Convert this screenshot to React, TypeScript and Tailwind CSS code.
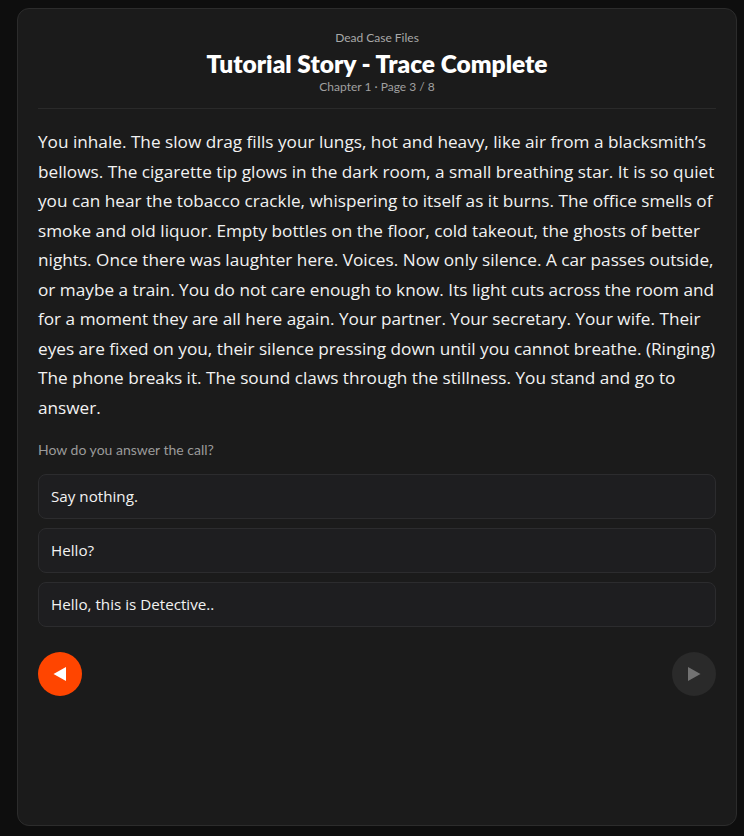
const choices = ["Say nothing.", "Hello?", "Hello, this is Detective.."];

export default function App() {
  return (
    <div
      className="min-h-[836px] bg-[#0e0e0e] pl-[17px] pr-[7px] pt-2 pb-[10px]"
      style={{ fontFamily: "Lato, 'Noto Sans', sans-serif" }}
    >
      <div className="h-[818px] rounded-xl border border-[#2c2c2c] bg-[#1b1b1b] px-5 pt-[21px]">
        {/* header */}
        <div className="text-center border-b border-[#2a2a2a] pb-[13px]">
          <div className="text-[12px] text-[#a8a8a8] leading-[16px]">Dead Case Files</div>
          <h1 className="mt-[3px] text-[24.5px] font-extrabold text-white leading-[30px]">
            Tutorial Story - Trace Complete
          </h1>
          <div className="text-[12px] text-[#a0a0a0] leading-[16px]">Chapter 1 · Page 3 / 8</div>
        </div>

        {/* story */}
        <p className="mt-[18px] font-['Open_Sans'] text-[17.2px] leading-[29.5px] text-[#f2f2f2]">
          You inhale. The slow drag fills your lungs, hot and heavy, like air from a blacksmith’s
          bellows. The cigarette tip glows in the dark room, a small breathing star. It is so quiet
          you can hear the tobacco crackle, whispering to itself as it burns. The office smells of
          smoke and old liquor. Empty bottles on the floor, cold takeout, the ghosts of better
          nights. Once there was laughter here. Voices. Now only silence. A car passes outside, or
          maybe a train. You do not care enough to know. Its light cuts across the room and for a
          moment they are all here again. Your partner. Your secretary. Your wife. Their eyes are
          fixed on you, their silence pressing down until you cannot breathe. (Ringing) The phone
          breaks it. The sound claws through the stillness. You stand and go to answer.
        </p>

        <div className="mt-[19px] text-[14px] text-[#9a9a9a] leading-[18px]">How do you answer the call?</div>

        {/* choices */}
        <div className="mt-[15px] flex flex-col gap-[9px]">
          {choices.map((c) => (
            <button
              key={c}
              className="h-[45px] rounded-lg border border-[#2c2c2e] bg-[#1e1e20] px-3 text-left font-['Open_Sans'] text-[15.2px] text-[#f2f2f2]"
            >
              {c}
            </button>
          ))}
        </div>

        {/* nav */}
        <div className="mt-[25px] flex items-center justify-between">
          <button className="flex h-11 w-11 items-center justify-center rounded-full bg-[#ff4500]">
            <svg width="16" height="16" viewBox="0 0 16 16">
              <path d="M14 1 L1.5 8 L14 15 Z" fill="white" />
            </svg>
          </button>
          <button className="flex h-11 w-11 items-center justify-center rounded-full bg-[#2a2a2a]">
            <svg width="16" height="16" viewBox="0 0 16 16">
              <path d="M2 1 L14.5 8 L2 15 Z" fill="#727272" />
            </svg>
          </button>
        </div>
      </div>
    </div>
  );
}
